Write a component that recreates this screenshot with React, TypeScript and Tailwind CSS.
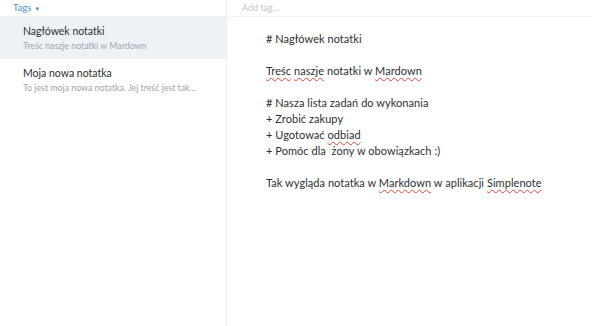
const wavy = "underline decoration-wavy decoration-[#e0453a] decoration-1 underline-offset-2";

const notes = [
  { title: "Nagłówek notatki", preview: "Treśc naszje notatki w Mardown", active: true },
  { title: "Moja nowa notatka", preview: "To jest moja nowa notatka. Jej treść jest tak...", active: false },
];

export default function App() {
  return (
    <div className="flex h-[326px] w-[592px] bg-white text-[#2d3034] font-['Lato',sans-serif]">
      <aside className="flex w-[227px] flex-col border-r border-[#eef0f2]">
        <div className="flex h-[17px] items-center border-b border-[#f0f2f4] pl-[13px] text-[9.5px] text-[#4a90d9]">
          Tags <span className="ml-[3px] text-[6px]">▼</span>
        </div>
        {notes.map((n) => (
          <div
            key={n.title}
            className={`flex h-[42px] flex-col justify-center pl-[23px] pr-[16px] ${n.active ? "bg-[#eef2f7]" : ""}`}
          >
            <div className="text-[10.5px] leading-[15px]">{n.title}</div>
            <div className="truncate text-[8.8px] leading-[13px] text-[#a0a5ab]">{n.preview}</div>
          </div>
        ))}
      </aside>
      <main className="flex flex-1 flex-col">
        <div className="flex h-[17px] items-center border-b border-[#f0f2f4] pl-[15px] text-[9px] text-[#c4c8cc]">
          Add tag...
        </div>
        <div className="pl-[39px] pt-[14px] text-[11px] leading-[16px] tracking-[0.05px]">
          <p># Nagłówek notatki</p>
          <p className="mt-[16px]">
            <span className={wavy}>Treśc</span> <span className={wavy}>naszje</span> notatki w{" "}
            <span className={wavy}>Mardown</span>
          </p>
          <p className="mt-[16px]"># Nasza lista zadań do wykonania</p>
          <p>+ Zrobić zakupy</p>
          <p>
            + Ugotować <span className={wavy}>odbiad</span>
          </p>
          <p>+ Pomóc dla&nbsp; żony w obowiązkach :)</p>
          <p className="mt-[16px]">
            Tak wygląda notatka w <span className={wavy}>Markdown</span> w aplikacji{" "}
            <span className={wavy}>Simplenote</span>
          </p>
        </div>
      </main>
    </div>
  );
}
